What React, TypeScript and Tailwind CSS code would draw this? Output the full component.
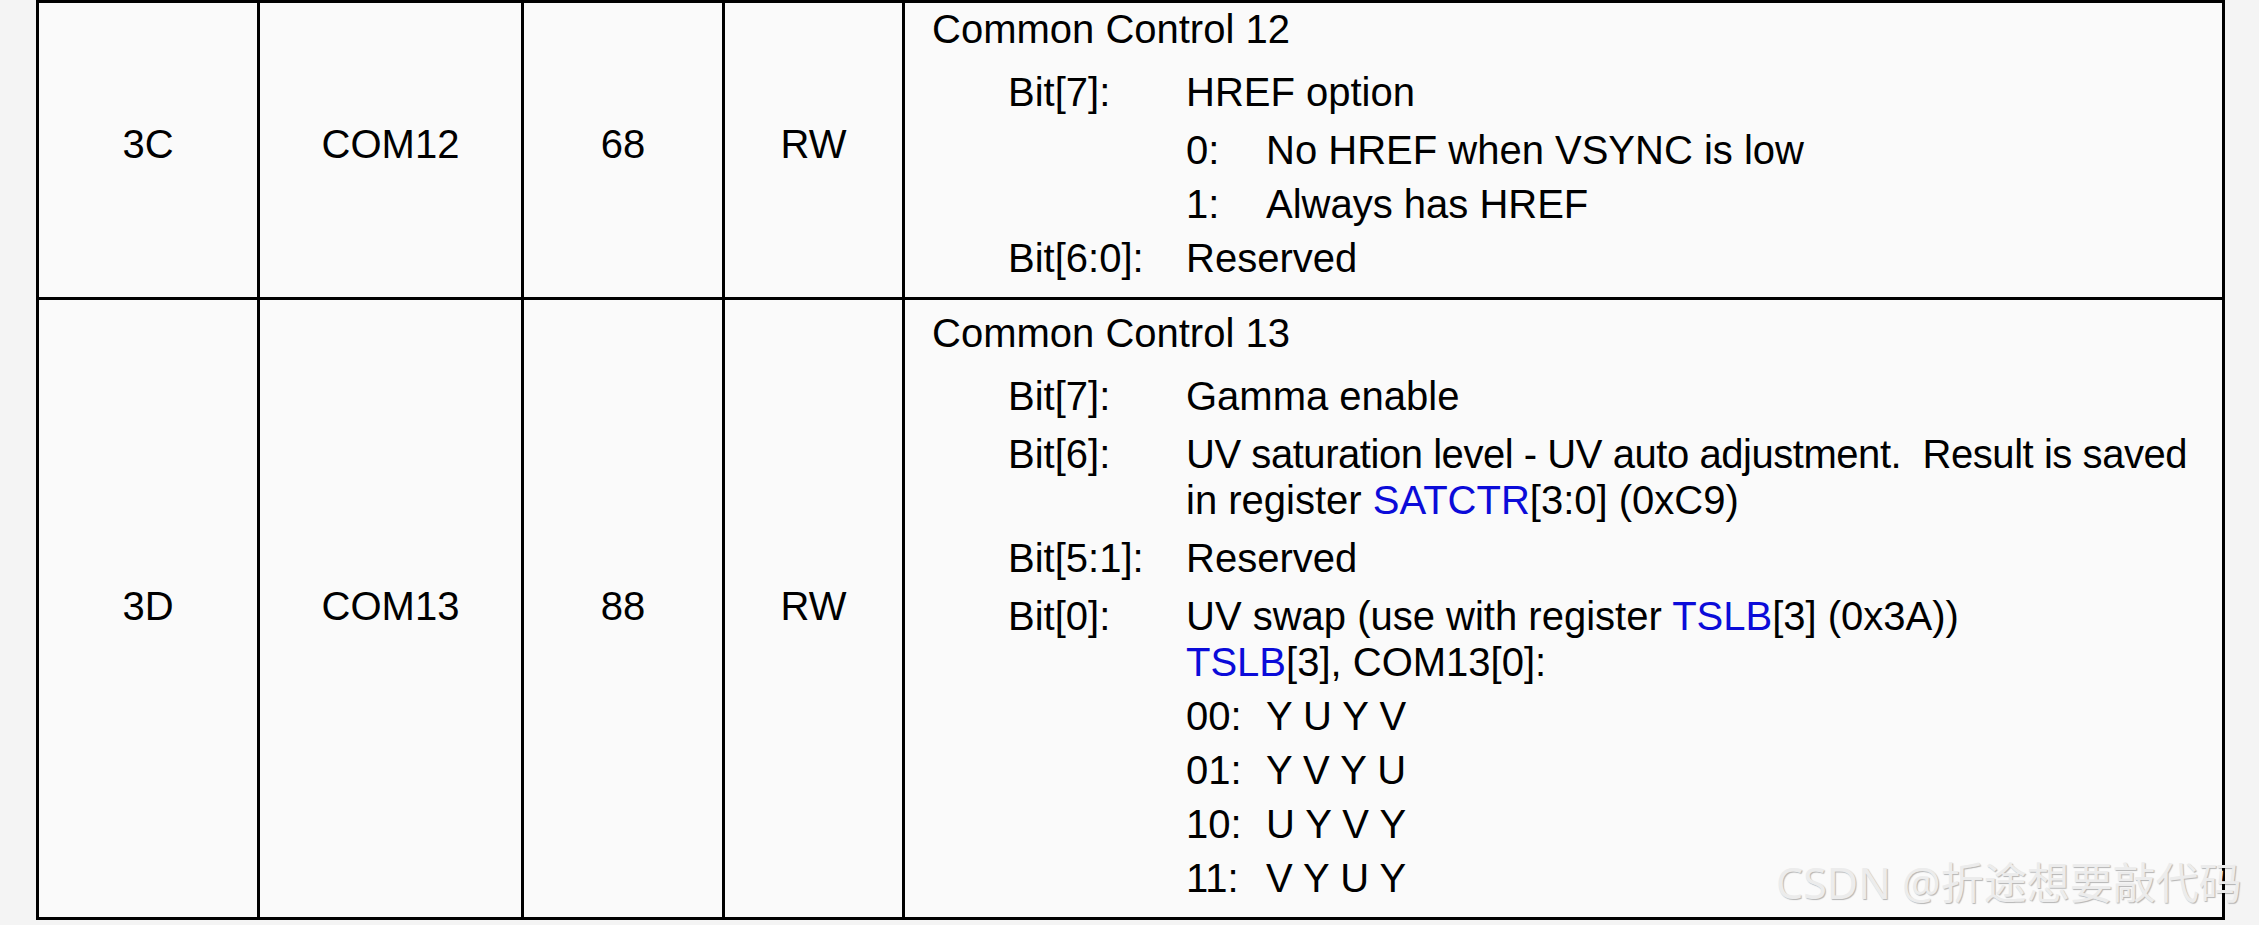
import type { ReactNode } from 'react';

type Row = {
  addr: string;
  name: string;
  def: string;
  rw: string;
  height: string;
  shift: string;
  pad: string;
  body: ReactNode;
};

const Reg = ({ children }: { children: ReactNode }) => <span className="text-[#0b0bd9]">{children}</span>;

// one "Bit[x]:" line, label column + value column
const BitLine = ({ label, children, first }: { label: string; children: ReactNode; first?: boolean }) => (
  <div className={`flex ml-[76px] ${first ? 'mt-[17px]' : 'mt-[12px]'}`}>
    <span className="w-[178px] shrink-0">{label}</span>
    <div className="whitespace-nowrap">{children}</div>
  </div>
);

const SubLine = ({ code, children, gap }: { code: string; children: ReactNode; gap: string }) => (
  <div className={`flex ml-[254px] whitespace-nowrap ${gap}`}>
    <span className="w-[80px] shrink-0">{code}</span>
    <span>{children}</span>
  </div>
);

const rows: Row[] = [
  {
    addr: '3C',
    name: 'COM12',
    def: '68',
    rw: 'RW',
    height: 'h-[297px]',
    shift: 'pb-[12px]',
    pad: 'pt-[3px]',
    body: (
      <>
        <div>Common Control 12</div>
        <BitLine label="Bit[7]:" first>
          HREF option
        </BitLine>
        <SubLine code="0:" gap="mt-[12px]">
          No HREF when VSYNC is low
        </SubLine>
        <SubLine code="1:" gap="mt-[8px]">
          Always has HREF
        </SubLine>
        <div className="flex ml-[76px] mt-[8px]">
          <span className="w-[178px] shrink-0">Bit[6:0]:</span>
          <span>Reserved</span>
        </div>
      </>
    ),
  },
  {
    addr: '3D',
    name: 'COM13',
    def: '88',
    rw: 'RW',
    height: 'h-[620px]',
    shift: 'pb-[5px]',
    pad: 'pt-[10px]',
    body: (
      <>
        <div>Common Control 13</div>
        <BitLine label="Bit[7]:" first>
          Gamma enable
        </BitLine>
        <BitLine label="Bit[6]:">
          <div className="tracking-[-0.45px]">UV saturation level - UV auto adjustment.{'\u00a0'} Result is saved</div>
          <div>
            in register <Reg>SATCTR</Reg>[3:0] (0xC9)
          </div>
        </BitLine>
        <BitLine label="Bit[5:1]:">Reserved</BitLine>
        <BitLine label="Bit[0]:">
          <div>
            UV swap (use with register <Reg>TSLB</Reg>[3] (0x3A))
          </div>
          <div>
            <Reg>TSLB</Reg>[3], COM13[0]:
          </div>
        </BitLine>
        <SubLine code="00:" gap="mt-[8px]">
          Y U Y V
        </SubLine>
        <SubLine code="01:" gap="mt-[8px]">
          Y V Y U
        </SubLine>
        <SubLine code="10:" gap="mt-[8px]">
          U Y V Y
        </SubLine>
        <SubLine code="11:" gap="mt-[8px]">
          V Y U Y
        </SubLine>
      </>
    ),
  },
];

export default function App() {
  return (
    <div className="relative h-[925px] w-full overflow-hidden bg-[#f4f4f4] font-['Liberation_Sans',Arial,sans-serif] text-[40px] leading-[46px] text-black">
      <div className="ml-[36px] w-[2189px] border-l-[3px] border-t-[3px] border-black bg-[#fafafa]">
        <div className="grid grid-cols-[221px_264px_201px_180px_1320px]">
          {rows.map((r) => (
            <div key={r.addr} className="contents">
              {[r.addr, r.name, r.def, r.rw].map((v, i) => (
                <div
                  key={`${r.addr}-${i}`}
                  className={`${r.height} ${r.shift} flex items-center justify-center border-r-[3px] border-b-[3px] border-black`}
                >
                  {v}
                </div>
              ))}
              <div className={`${r.height} ${r.pad} pl-[27px] border-r-[3px] border-b-[3px] border-black`}>{r.body}</div>
            </div>
          ))}
        </div>
      </div>

      {/* watermark */}
      <div className="absolute left-[1776px] top-[861px] whitespace-nowrap font-['Noto_Sans','Noto_Sans_CJK_SC',sans-serif] text-[43px] leading-none text-[#ececec] [text-shadow:1px_1px_1px_rgba(0,0,0,0.28)]">
        CSDN @折途想要敲代码
      </div>
    </div>
  );
}
